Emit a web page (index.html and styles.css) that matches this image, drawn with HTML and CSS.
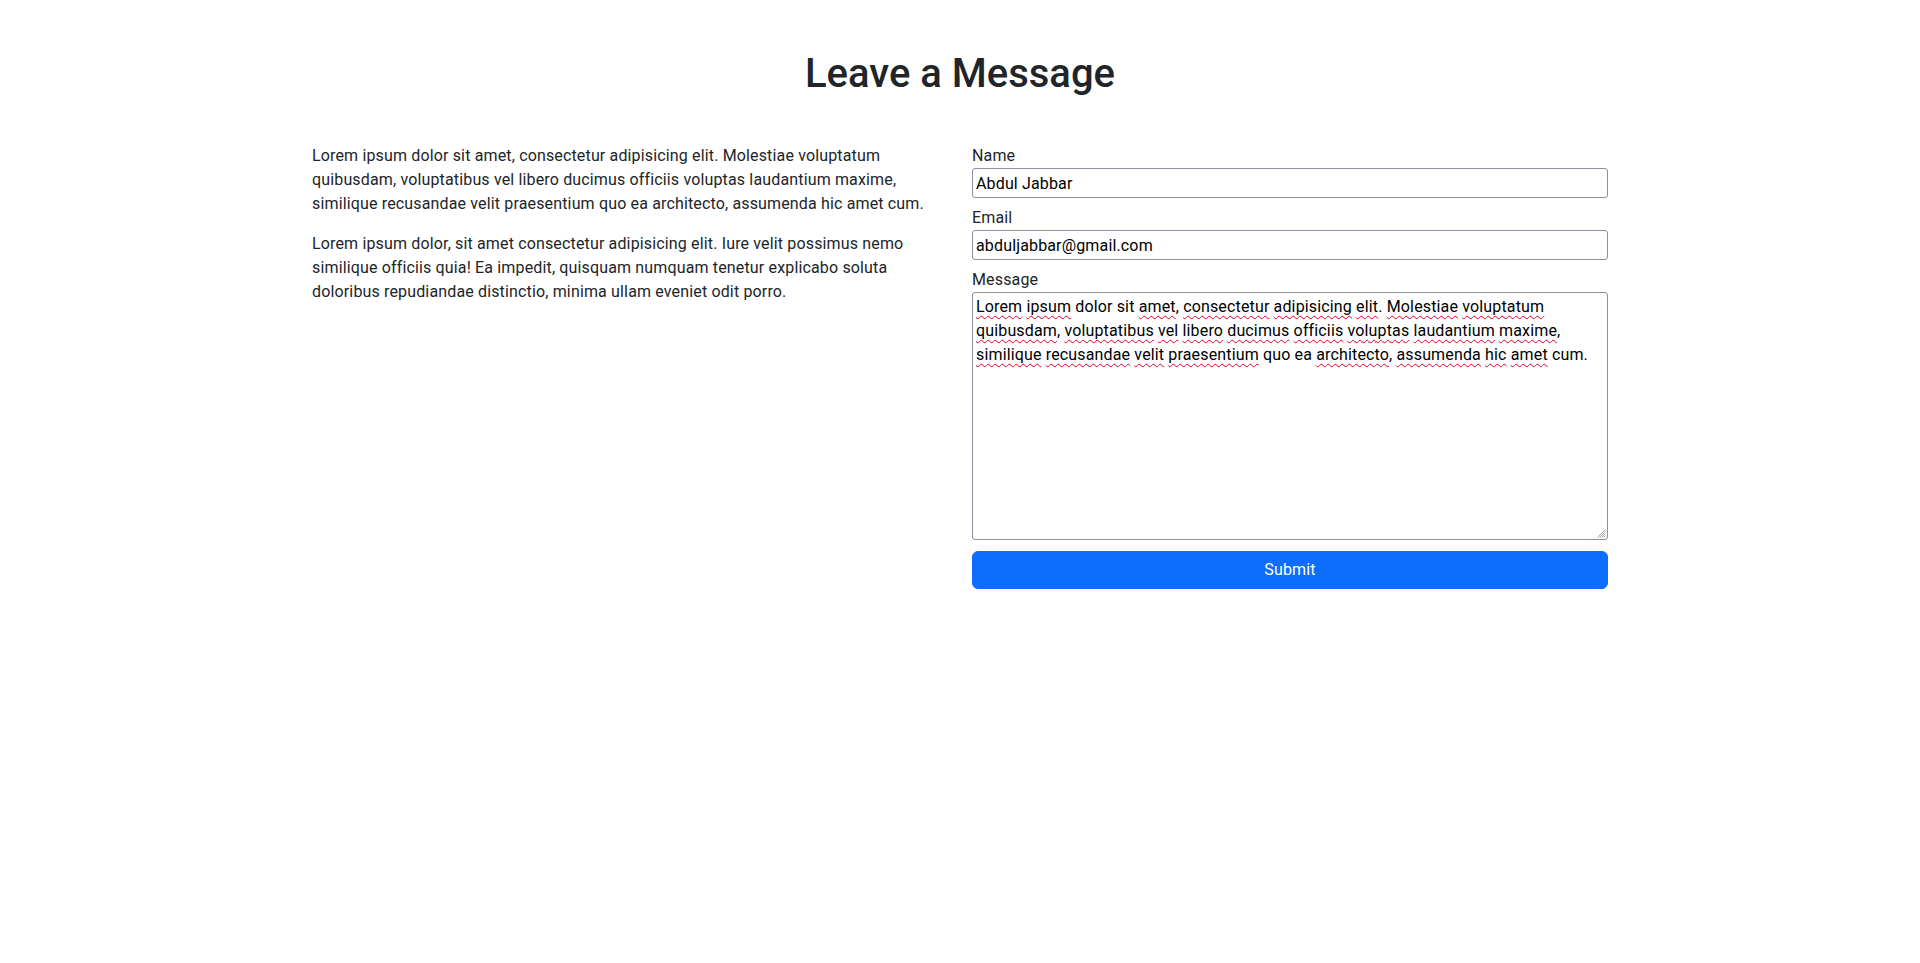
FILE: index.html
```html
<!DOCTYPE html>
<html lang="en">
<head>
<meta charset="utf-8">
<title>Leave a Message</title>
<link rel="stylesheet" href="styles.css">
</head>
<body>
<div class="container">
  <h1 class="title">Leave a Message</h1>
  <div class="row">
    <div class="col">
      <p>Lorem ipsum dolor sit amet, consectetur adipisicing elit. Molestiae voluptatum quibusdam, voluptatibus vel libero ducimus officiis voluptas laudantium maxime, similique recusandae velit praesentium quo ea architecto, assumenda hic amet cum.</p>
      <p>Lorem ipsum dolor, sit amet consectetur adipisicing elit. Iure velit possimus nemo similique officiis quia! Ea impedit, quisquam numquam tenetur explicabo soluta doloribus repudiandae distinctio, minima ullam eveniet odit porro.</p>
    </div>
    <div class="col">
      <form class="form">
        <div class="field">
          <label class="label" for="name">Name</label>
          <input class="input" id="name" type="text" value="Abdul Jabbar">
        </div>
        <div class="field">
          <label class="label" for="email">Email</label>
          <input class="input" id="email" type="email" value="abduljabbar@gmail.com">
        </div>
        <div class="field field-message">
          <label class="label" for="message">Message</label>
          <div class="textarea" id="message" role="textbox" aria-multiline="true" contenteditable="true" spellcheck="false"><span class="sp">Lorem</span> <span class="sp">ipsum</span> dolor sit <span class="sp">amet</span>, <span class="sp">consectetur</span> <span class="sp">adipisicing</span> <span class="sp">elit</span>. <span class="sp">Molestiae</span> <span class="sp">voluptatum</span> <span class="sp">quibusdam</span>, <span class="sp">voluptatibus</span> <span class="sp">vel</span> <span class="sp">libero</span> <span class="sp">ducimus</span> <span class="sp">officiis</span> <span class="sp">voluptas</span> <span class="sp">laudantium</span> <span class="sp">maxime</span>, <span class="sp">similique</span> <span class="sp">recusandae</span> <span class="sp">velit</span> <span class="sp">praesentium</span> quo ea <span class="sp">architecto</span>, <span class="sp">assumenda</span> <span class="sp">hic</span> <span class="sp">amet</span> cum.</div>
          <svg class="grip" width="10" height="10" viewBox="0 0 10 10" aria-hidden="true">
            <path d="M9.5 1.5 L1.5 9.5 M9.5 3.5 L3.5 9.5 M9.5 5.5 L5.5 9.5 M9.5 7.5 L7.5 9.5" stroke="#8f8f9d" stroke-width="0.8"/>
          </svg>
        </div>
        <button class="button" type="button">Submit</button>
      </form>
    </div>
  </div>
</div>
</body>
</html>
```
FILE: styles.css
```css
* { box-sizing: border-box; }
body {
  margin: 0;
  font-family: Roboto, "Noto Sans", sans-serif;
  font-size: 16px;
  line-height: 1.5;
  letter-spacing: 0.15px;
  color: #212529;
  background: #fff;
}
.container {
  max-width: 1320px;
  margin: 0 auto;
  padding: 0 12px;
}
.title {
  margin: 50px 0 46px;
  text-align: center;
  font-size: 40px;
  font-weight: 500;
  line-height: 1.2;
  letter-spacing: 0;
}
.row {
  display: flex;
  margin: 0 -12px;
}
.col {
  flex: 0 0 50%;
  padding: 0 12px;
}
.col p { margin: 0 0 16px; }
.form { display: flex; flex-direction: column; }
.field { display: flex; flex-direction: column; margin-bottom: 8px; }
.field-message { position: relative; margin-bottom: 11px; }
.label { display: block; line-height: 24px; }
.input {
  font: inherit;
  letter-spacing: inherit;
  line-height: 24px;
  height: 30px;
  padding: 2px 3px;
  border: 1px solid #8f8f9d;
  border-radius: 3px;
  color: #000;
  background: #fff;
  width: 100%;
  outline: none;
}
.textarea {
  height: 248px;
  padding: 2px 3px;
  border: 1px solid #8f8f9d;
  border-radius: 3px;
  color: #000;
  line-height: 24px;
  overflow: hidden;
  outline: none;
}
.sp {
  text-decoration: underline wavy #e0001b;
  text-decoration-thickness: 1px;
  text-underline-offset: 3px;
}
.grip { position: absolute; right: 2px; bottom: 2px; }
.button {
  font: inherit;
  letter-spacing: inherit;
  line-height: 24px;
  padding: 6px 12px;
  border: 1px solid #0d6efd;
  border-radius: 6px;
  background: #0d6efd;
  color: #fff;
  width: 100%;
  cursor: pointer;
}
```
